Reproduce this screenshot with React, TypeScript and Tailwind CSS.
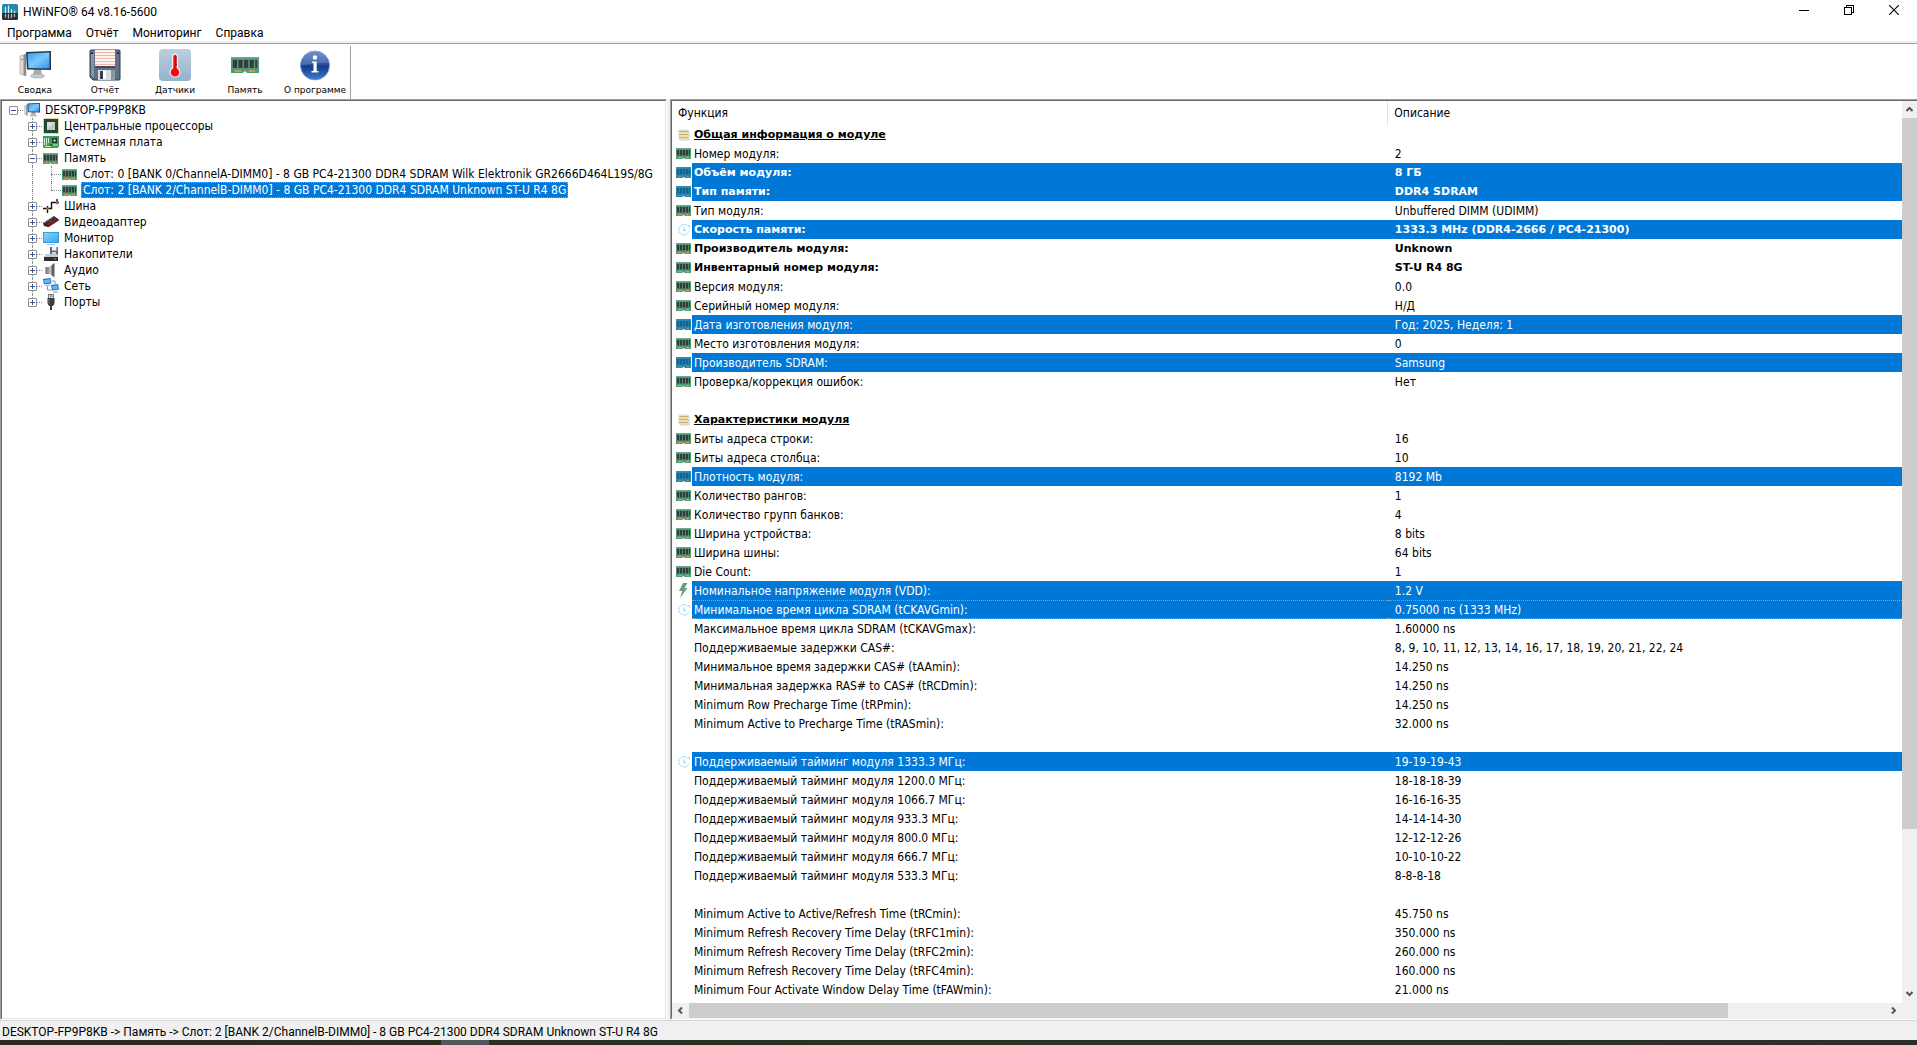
import type { ReactNode } from 'react';

const UI = "font-['Roboto','Noto_Sans',sans-serif]";

/* ---------- icons ---------- */

function RamIcon({ tinted = false, large = false }: { tinted?: boolean; large?: boolean }) {
  const board = tinted ? '#2788a9' : '#4f9a78';
  const chip = tinted ? '#1c5f96' : '#38393b';
  const edge = tinted ? '#2f93b0' : '#6fb08f';
  const pin = tinted ? '#5f93a0' : '#dc9a4a';
  return (
    <svg viewBox="0 0 15 11" className={large ? 'h-[16px] w-[28px]' : 'h-[11px] w-[15px]'} preserveAspectRatio="none" aria-hidden="true">
      <path d="M0 0H15V11H8.600L8 10H7L6.400 11H0Z" fill={board} />
      <rect x="0" y="0" width="15" height="1" fill={edge} opacity=".7" />
      {[1, 4, 7, 10].map((x) => (
        <rect key={x} x={x} y="2" width="2.200" height="5.500" fill={chip} />
      ))}
      <rect x="13" y="2" width="1" height="5.500" fill={chip} />
      <rect x="2" y="9" width="3.500" height="1.200" fill={pin} />
      <rect x="9.500" y="9" width="3.500" height="1.200" fill={pin} />
    </svg>
  );
}

function PcIcon({ size }: { size: 'sm' | 'lg' }) {
  return (
    <svg viewBox="0 0 32 32" className={size === 'lg' ? 'size-8' : 'size-4'} aria-hidden="true">
      <defs>
        <linearGradient id={`scr-${size}`} x1="0" y1="0" x2="1" y2="1">
          <stop offset="0" stopColor="#3a9cf0" />
          <stop offset=".5" stopColor="#7cc8ff" />
          <stop offset="1" stopColor="#2f8fe8" />
        </linearGradient>
      </defs>
      <path d="M1 7 7 5V27L1 25Z" fill="#dcdcdc" stroke="#9a9a9a" strokeWidth=".6" />
      <path d="M4.500 6 7 5V27L4.500 26Z" fill="#8b8b8b" />
      <rect x="2" y="10" width="2" height="1" fill="#888" />
      <path d="M15 20h7l1 6h-9Z" fill="#a9adb2" />
      <ellipse cx="18.500" cy="27" rx="7" ry="2" fill="#c9ccd0" stroke="#8f9398" strokeWidth=".5" />
      <path d="M7 3 32 2V21L8 20.500Z" fill="#24384a" />
      <path d="M8.500 4.500 30.500 3.500V19.500L9.500 19Z" fill={`url(#scr-${size})`} />
    </svg>
  );
}

function FloppyIcon() {
  return (
    <svg viewBox="0 0 32 32" className="size-8" aria-hidden="true">
      <path d="M1 2Q1 1 2 1H30Q31 1 31 2V30Q31 31 30 31H4L1 28Z" fill="#5f7087" stroke="#2f3a49" />
      <path d="M2 2H5V28L2 27Z" fill="#8493a8" />
      <rect x="6" y="1" width="20" height="16" fill="#fdf3ee" />
      <path d="M6 3.500H26M6 6.500H26M6 9.500H26M6 12.500H26M6 15.500H26" stroke="#efb9a8" />
      <rect x="2" y="3" width="2" height="2" fill="#27303c" />
      <rect x="28" y="3" width="2" height="2" fill="#27303c" />
      <path d="M6 17H26V19H6Z" fill="#3d4a5b" />
      <rect x="9" y="21" width="17" height="10" fill="#d8dbe0" />
      <rect x="11" y="22" width="5" height="8" fill="#36404d" />
      <rect x="14" y="22" width="3" height="8" fill="#fff" />
      <rect x="22" y="21" width="4" height="10" fill="#8d96a3" />
    </svg>
  );
}

function ThermoIcon() {
  return (
    <svg viewBox="0 0 32 32" className="size-8" aria-hidden="true">
      <defs>
        <linearGradient id="thermo" x1="0" y1="0" x2="0" y2="1">
          <stop offset="0" stopColor="#bccfdd" />
          <stop offset="1" stopColor="#94b2cc" />
        </linearGradient>
      </defs>
      <rect width="32" height="32" rx="4" fill="url(#thermo)" />
      <path d="M13 7.500a3 3 0 0 1 6 0V18.500a5.500 5.500 0 1 1-6 0Z" fill="#eef3f7" />
      <path d="M14.300 7.500a1.700 1.700 0 0 1 3.400 0V19.300a4.300 4.300 0 1 1-3.400 0Z" fill="#f30808" />
      <path d="M16 8H18M16 10.500H18M16 13H18M16 15.500H18" stroke="#7d0f0f" strokeWidth=".8" />
    </svg>
  );
}

function InfoIcon() {
  return (
    <svg viewBox="0 0 32 32" className="size-8" aria-hidden="true">
      <defs>
        <linearGradient id="info" x1="0" y1="0" x2="0" y2="1">
          <stop offset="0" stopColor="#4a78c4" />
          <stop offset=".5" stopColor="#1f4a9c" />
          <stop offset=".52" stopColor="#123a8a" />
          <stop offset="1" stopColor="#3d7fd0" />
        </linearGradient>
      </defs>
      <circle cx="16" cy="16.500" r="14.500" fill="url(#info)" stroke="#7d9ad0" strokeWidth=".8" />
      <path d="M3 16A13 13 0 0 1 29 14Q17 14 3 16Z" fill="#fff" opacity=".18" />
      <circle cx="16" cy="8.500" r="2.200" fill="#fff" />
      <path d="M13 12.500H17.700V22H19.500V23.500H12.500V22H14.500V14H13Z" fill="#fff" />
    </svg>
  );
}

function AppIcon() {
  return (
    <svg viewBox="0 0 16 16" className="size-4" aria-hidden="true">
      <path d="M0 1.500Q0 0 1.500 0H14.500Q16 0 16 1.500V9H0Z" fill="#2389ad" />
      <path d="M0 9H16V14.500Q16 16 14.500 16H1.500Q0 16 0 14.500Z" fill="#2d2f31" />
      <path d="M3.500 3V9M6.500 1.500V9M9.500 5V9M12.500 6.500V9" stroke="#d9f2fa" strokeWidth="1.200" />
      <path d="M3.500 10V13.500M6.500 10V14.500M9.500 10V14M12.500 10V13" stroke="#b9bcbe" strokeWidth="1.200" />
    </svg>
  );
}

function CpuIcon() {
  return (
    <svg viewBox="0 0 16 16" className="size-4" aria-hidden="true">
      <rect x=".5" y=".5" width="15" height="15" fill="none" stroke="#c9a640" strokeDasharray="1 1" />
      <rect x="1" y="1" width="14" height="14" fill="#1f4a33" />
      <rect x="4" y="4" width="8" height="8" fill="#d9dcd8" />
      <path d="M4 12 12 4V12Z" fill="#c3c8c3" />
    </svg>
  );
}

function BoardIcon() {
  return (
    <svg viewBox="0 0 16 16" className="size-4" aria-hidden="true">
      <path d="M0 2H16V13H15V14H0Z" fill="#3aa05c" />
      <path d="M1.500 4V11M3.500 4V11M5.500 4V9" stroke="#c8ecd2" />
      <rect x="9" y="4" width="5" height="5" fill="#20342a" />
      <rect x="10.500" y="5.500" width="2" height="2" fill="#e6e6e6" />
      <path d="M2 12.500H8M10 11H15" stroke="#d7e58a" />
      <rect x="7" y="10" width="2" height="2" fill="#1e6b3a" />
    </svg>
  );
}

function BusIcon() {
  return (
    <svg viewBox="0 0 16 16" className="size-4" aria-hidden="true">
      <path d="M0 10.500H8.500V4.500H16" fill="none" stroke="#111" strokeWidth="1.400" />
      <path d="M4.500 8V15M14 1V6" stroke="#111" strokeWidth="1.400" />
      <circle cx="4.500" cy="10.500" r="1.200" fill="#8c8a2c" />
      <circle cx="14" cy="4.500" r="1.200" fill="#8c8a2c" />
    </svg>
  );
}

function GpuIcon() {
  return (
    <svg viewBox="0 0 16 16" className="size-4" aria-hidden="true">
      <path d="M0 9 11 2 16 5.500 5 13 1 12Z" fill="#2c2a2b" />
      <path d="M1 9.500 11 3" stroke="#6b6769" />
      <path d="M5 11 7.500 7 9 9 13 4.500" fill="none" stroke="#b3262f" strokeWidth="1.100" />
      <path d="M5 13 16 6" stroke="#7c1f26" />
    </svg>
  );
}

function MonitorIcon() {
  return (
    <svg viewBox="0 0 16 16" className="size-4" aria-hidden="true">
      <defs>
        <linearGradient id="mon" x1="0" y1="0" x2="1" y2="1">
          <stop offset="0" stopColor="#8ad4fb" />
          <stop offset="1" stopColor="#3aa7ec" />
        </linearGradient>
      </defs>
      <rect x="0" y="2" width="16" height="11" fill="#2b8fd6" />
      <rect x=".8" y="2.800" width="14.400" height="9.400" fill="url(#mon)" />
      <path d="M4 14.500H12" stroke="#8cc9ee" />
    </svg>
  );
}

function DriveIcon() {
  return (
    <svg viewBox="0 0 16 16" className="size-4" aria-hidden="true">
      <rect x="7" y="1" width="8" height="8" fill="#5d6b7d" />
      <rect x="9" y="1" width="4.500" height="3.500" fill="#f4f4f4" />
      <rect x="9" y="6" width="4" height="3" fill="#cfd4da" />
      <path d="M3 8H14L15 11H1Z" fill="#c8c8c8" />
      <rect x="1" y="11" width="14" height="4" fill="#2e2e2e" />
      <rect x="11" y="12.500" width="2" height="1" fill="#37e04a" />
    </svg>
  );
}

function AudioIcon() {
  return (
    <svg viewBox="0 0 16 16" className="size-4" aria-hidden="true">
      <rect x="3" y="5" width="3.500" height="7" fill="#8f959b" />
      <path d="M6 5.500 11 1V15L6 11.500Z" fill="#b9bec3" />
      <path d="M8.500 3.500 11.500 1V15.500L8.500 13Z" fill="#5b6167" />
      <path d="M3 5V12" stroke="#5f6469" />
    </svg>
  );
}

function NetIcon() {
  return (
    <svg viewBox="0 0 16 16" className="size-4" aria-hidden="true">
      <path d="M0 1 7.500 0 8.500 5.500 1 6.500Z" fill="#1f66b8" />
      <path d="M1 2 7 1 7.700 4.700 1.700 5.500Z" fill="#5bb8f7" />
      <path d="M2.500 7 6.500 6.500 7 8 3 8.500Z" fill="#b0b5ba" />
      <path d="M8 7 15 6 16 11.500 9 12.500Z" fill="#1f66b8" />
      <path d="M9 8 14.300 7 15 10.700 9.700 11.500Z" fill="#5bb8f7" />
      <path d="M10 13.500 14.500 12.800 15 14.500 10.500 15Z" fill="#b0b5ba" />
      <path d="M4.500 8.500V12H8.500M9 3H12V6" fill="none" stroke="#8b9298" />
    </svg>
  );
}

function PortIcon() {
  return (
    <svg viewBox="0 0 16 16" className="size-4" aria-hidden="true">
      <rect x="5.500" y=".5" width="5" height="4" fill="#d4d4d4" stroke="#666" strokeWidth=".8" />
      <path d="M7 2H7.800M8.400 2H9.200" stroke="#333" />
      <path d="M4.500 4H11.500V9Q11.500 11 9.500 12H6.500Q4.500 11 4.500 9Z" fill="#3c3c3c" />
      <path d="M6 5V9.500" stroke="#777" />
      <path d="M8 12V16" stroke="#3c3c3c" strokeWidth="2" />
    </svg>
  );
}

function NoteIcon() {
  return (
    <svg viewBox="0 0 12 12" className="ml-0.5 size-3" aria-hidden="true">
      <rect x="1.500" y="1.500" width="10" height="10" rx="1" fill="#c4c0b8" opacity=".7" />
      <rect x=".5" y=".5" width="10" height="10" rx="1" fill="#e6dfc8" />
      <path d="M1 2.500H10M1 5.500H10M1 8.500H10" stroke="#d3b04a" />
    </svg>
  );
}

function ClockIcon() {
  return (
    <svg viewBox="0 0 12 12" className="ml-0.5 size-3" fill="none" stroke="#93d3f3" aria-hidden="true">
      <path d="M9.500 1.800A5.200 5.200 0 1 0 11 7.500" strokeWidth="1" strokeDasharray="2.500 .6" />
      <path d="M6 3.500V6.500H8" strokeWidth="1.200" />
      <path d="M10 1.500H11.500V3.500" strokeWidth="1" />
    </svg>
  );
}

function BoltIcon() {
  return (
    <svg viewBox="0 0 10 15" className="ml-0.5 h-[15px] w-[10px]" aria-hidden="true">
      <path d="M5 0H9.500L6.500 5H9.500L2 15 4.200 8H1Z" fill="#6f9a82" />
    </svg>
  );
}

function Chevron({ dir }: { dir: 'up' | 'down' | 'left' | 'right' }) {
  const d = {
    up: 'M1.500 6 4.500 3 7.500 6',
    down: 'M1.500 3 4.500 6 7.500 3',
    left: 'M6 1.500 3 4.500 6 7.500',
    right: 'M3 1.500 6 4.500 3 7.500',
  }[dir];
  return (
    <svg viewBox="0 0 9 9" className="size-[9px]" aria-hidden="true">
      <path d={d} fill="none" stroke="#555" strokeWidth="2" />
    </svg>
  );
}

/* ---------- window chrome ---------- */

function TitleBar() {
  const btn = 'flex w-[45px] items-center justify-center hover:bg-[#e5e5e5]';
  return (
    <header className="flex h-6 shrink-0 justify-between">
      <div className="flex items-center gap-[5px] pl-0.5">
        <AppIcon />
        <h1 className={`text-[12px] leading-4 ${UI}`}>HWiNFO® 64 v8.16-5600</h1>
      </div>
      <div className="flex pr-px pb-1">
        <button type="button" aria-label="Свернуть" className={btn}>
          <svg viewBox="0 0 10 10" className="size-[10px]" shapeRendering="crispEdges"><path d="M0 5.500H10" stroke="#000" /></svg>
        </button>
        <button type="button" aria-label="Восстановить" className={btn}>
          <svg viewBox="0 0 10 10" className="size-[10px]" fill="none" stroke="#000" shapeRendering="crispEdges">
            <path d="M.5 2.500H7.500V9.500H.5Z" />
            <path d="M2.500 2.500V.5H9.500V7.500H7.500" />
          </svg>
        </button>
        <button type="button" aria-label="Закрыть" className={btn}>
          <svg viewBox="0 0 10 10" className="size-[10px]"><path d="M0 0 10 10M10 0 0 10" stroke="#000" strokeWidth="1.100" /></svg>
        </button>
      </div>
    </header>
  );
}

function MenuBar() {
  return (
    <nav className={`flex h-[17px] shrink-0 items-center gap-[14px] pl-[7px] text-[12px] leading-4 ${UI}`}>
      {['Программа', 'Отчёт', 'Мониторинг', 'Справка'].map((m) => (
        <button key={m} type="button">{m}</button>
      ))}
    </nav>
  );
}

function Toolbar() {
  const tools: [string, ReactNode][] = [
    ['Сводка', <PcIcon size="lg" />],
    ['Отчёт', <FloppyIcon />],
    ['Датчики', <ThermoIcon />],
    ['Память', <RamIcon large />],
    ['О программе', <InfoIcon />],
  ];
  return (
    <div role="toolbar" className="flex h-[58px] shrink-0 border-t-2 border-[#f0f0f0]">
      <div className="flex flex-1 border-t border-[#a0a0a0]">
        <div className="mt-0.5 flex border-r border-[#a0a0a0]">
          {tools.map(([label, icon]) => (
            <button
              key={label}
              type="button"
              className="flex w-[70px] flex-col items-center gap-[3px] pt-[3px] text-[9px] leading-3 whitespace-nowrap font-['DejaVu_Sans',sans-serif]"
            >
              <span className="flex h-8 items-center">{icon}</span>
              {label}
            </button>
          ))}
        </div>
      </div>
    </div>
  );
}

/* ---------- device tree ---------- */

function GuideCell({ toggle, up, down, right }: { toggle?: '+' | '-'; up?: boolean; down?: boolean; right?: boolean }) {
  return (
    <span className="relative flex h-4 w-[19px] shrink-0 items-center justify-center">
      {up && <span className="absolute top-0 left-[9px] h-2 border-l border-dotted border-[#8c8c8c]" />}
      {down && <span className="absolute bottom-0 left-[9px] h-2 border-l border-dotted border-[#8c8c8c]" />}
      {right && <span className="absolute top-2 right-0 w-[10px] border-t border-dotted border-[#8c8c8c]" />}
      {toggle && (
        <button
          type="button"
          aria-label={toggle === '+' ? 'Развернуть' : 'Свернуть'}
          className="relative flex size-[9px] items-center justify-center rounded-[1px] border border-[#919191] bg-white"
        >
          <svg viewBox="0 0 5 5" className="size-[5px]" shapeRendering="crispEdges">
            <path d={toggle === '+' ? 'M0 2.500H5M2.500 0V5' : 'M0 2.500H5'} stroke="#3a55a0" />
          </svg>
        </button>
      )}
    </span>
  );
}

function TreeRow({ cells, icon, label, selected }: { cells: ReactNode; icon: ReactNode; label: string; selected?: boolean }) {
  return (
    <div className="flex h-4 items-center">
      {cells}
      <span className="ml-px flex w-4 shrink-0 items-center">{icon}</span>
      <span
        className={
          selected
            ? 'ml-[3px] flex h-4 items-center border border-dotted border-[#ff8728] bg-[#0078d7] px-px leading-[14px] whitespace-nowrap text-white'
            : 'ml-[3px] px-0.5 leading-4 whitespace-nowrap'
        }
      >
        {label}
      </span>
    </div>
  );
}

type Branch = { label: string; icon: ReactNode; children?: { label: string; selected?: boolean }[] };

const branches: Branch[] = [
  { label: 'Центральные процессоры', icon: <CpuIcon /> },
  { label: 'Системная плата', icon: <BoardIcon /> },
  {
    label: 'Память',
    icon: <RamIcon />,
    children: [
      { label: 'Слот: 0 [BANK 0/ChannelA-DIMM0] - 8 GB PC4-21300 DDR4 SDRAM Wilk Elektronik GR2666D464L19S/8G' },
      { label: 'Слот: 2 [BANK 2/ChannelB-DIMM0] - 8 GB PC4-21300 DDR4 SDRAM Unknown ST-U R4 8G', selected: true },
    ],
  },
  { label: 'Шина', icon: <BusIcon /> },
  { label: 'Видеоадаптер', icon: <GpuIcon /> },
  { label: 'Монитор', icon: <MonitorIcon /> },
  { label: 'Накопители', icon: <DriveIcon /> },
  { label: 'Аудио', icon: <AudioIcon /> },
  { label: 'Сеть', icon: <NetIcon /> },
  { label: 'Порты', icon: <PortIcon /> },
];

function DeviceTree() {
  return (
    <div className="w-[667px] shrink-0 overflow-hidden border-t border-r border-b border-l border-t-[#a0a0a0] border-r-white border-b-white border-l-[#a0a0a0]">
      <div className="h-full border border-t-[#696969] border-r-[#e3e3e3] border-b-[#e3e3e3] border-l-[#696969] bg-white pt-px pl-0.5">
        <TreeRow cells={<GuideCell toggle="-" right />} icon={<PcIcon size="sm" />} label="DESKTOP-FP9P8KB" />
        <ul>
          {branches.map((b, i) => {
            const last = i === branches.length - 1;
            return (
              <li key={b.label}>
                <TreeRow
                  cells={<><GuideCell /><GuideCell toggle={b.children ? '-' : '+'} up down={!last} right /></>}
                  icon={b.icon}
                  label={b.label}
                />
                {b.children && (
                  <ul>
                    {b.children.map((c, j) => (
                      <li key={c.label}>
                        <TreeRow
                          cells={<><GuideCell /><GuideCell up down /><GuideCell up down={j < b.children!.length - 1} right /></>}
                          icon={<RamIcon />}
                          label={c.label}
                          selected={c.selected}
                        />
                      </li>
                    ))}
                  </ul>
                )}
              </li>
            );
          })}
        </ul>
      </div>
    </div>
  );
}

/* ---------- details ---------- */

type Row = {
  icon?: 'ram' | 'clock' | 'bolt' | 'note';
  name?: string;
  value?: string;
  hl?: boolean;
  bold?: boolean;
  focus?: boolean;
};

const rows: Row[] = [
  { icon: 'note', name: 'Общая информация о модуле' },
  { icon: 'ram', name: 'Номер модуля:', value: '2' },
  { icon: 'ram', name: 'Объём модуля:', value: '8 ГБ', hl: true, bold: true },
  { icon: 'ram', name: 'Тип памяти:', value: 'DDR4 SDRAM', hl: true, bold: true },
  { icon: 'ram', name: 'Тип модуля:', value: 'Unbuffered DIMM (UDIMM)' },
  { icon: 'clock', name: 'Скорость памяти:', value: '1333.3 MHz (DDR4-2666 / PC4-21300)', hl: true, bold: true },
  { icon: 'ram', name: 'Производитель модуля:', value: 'Unknown', bold: true },
  { icon: 'ram', name: 'Инвентарный номер модуля:', value: 'ST-U R4 8G', bold: true },
  { icon: 'ram', name: 'Версия модуля:', value: '0.0' },
  { icon: 'ram', name: 'Серийный номер модуля:', value: 'Н/Д' },
  { icon: 'ram', name: 'Дата изготовления модуля:', value: 'Год: 2025, Неделя: 1', hl: true },
  { icon: 'ram', name: 'Место изготовления модуля:', value: '0' },
  { icon: 'ram', name: 'Производитель SDRAM:', value: 'Samsung', hl: true },
  { icon: 'ram', name: 'Проверка/коррекция ошибок:', value: 'Нет' },
  {},
  { icon: 'note', name: 'Характеристики модуля' },
  { icon: 'ram', name: 'Биты адреса строки:', value: '16' },
  { icon: 'ram', name: 'Биты адреса столбца:', value: '10' },
  { icon: 'ram', name: 'Плотность модуля:', value: '8192 Mb', hl: true },
  { icon: 'ram', name: 'Количество рангов:', value: '1' },
  { icon: 'ram', name: 'Количество групп банков:', value: '4' },
  { icon: 'ram', name: 'Ширина устройства:', value: '8 bits' },
  { icon: 'ram', name: 'Ширина шины:', value: '64 bits' },
  { icon: 'ram', name: 'Die Count:', value: '1' },
  { icon: 'bolt', name: 'Номинальное напряжение модуля (VDD):', value: '1.2 V', hl: true },
  { icon: 'clock', name: 'Минимальное время цикла SDRAM (tCKAVGmin):', value: '0.75000 ns (1333 MHz)', hl: true, focus: true },
  { name: 'Максимальное время цикла SDRAM (tCKAVGmax):', value: '1.60000 ns' },
  { name: 'Поддерживаемые задержки CAS#:', value: '8, 9, 10, 11, 12, 13, 14, 16, 17, 18, 19, 20, 21, 22, 24' },
  { name: 'Минимальное время задержки CAS# (tAAmin):', value: '14.250 ns' },
  { name: 'Минимальная задержка RAS# to CAS# (tRCDmin):', value: '14.250 ns' },
  { name: 'Minimum Row Precharge Time (tRPmin):', value: '14.250 ns' },
  { name: 'Minimum Active to Precharge Time (tRASmin):', value: '32.000 ns' },
  {},
  { icon: 'clock', name: 'Поддерживаемый тайминг модуля 1333.3 МГц:', value: '19-19-19-43', hl: true },
  { name: 'Поддерживаемый тайминг модуля 1200.0 МГц:', value: '18-18-18-39' },
  { name: 'Поддерживаемый тайминг модуля 1066.7 МГц:', value: '16-16-16-35' },
  { name: 'Поддерживаемый тайминг модуля 933.3 МГц:', value: '14-14-14-30' },
  { name: 'Поддерживаемый тайминг модуля 800.0 МГц:', value: '12-12-12-26' },
  { name: 'Поддерживаемый тайминг модуля 666.7 МГц:', value: '10-10-10-22' },
  { name: 'Поддерживаемый тайминг модуля 533.3 МГц:', value: '8-8-8-18' },
  {},
  { name: 'Minimum Active to Active/Refresh Time (tRCmin):', value: '45.750 ns' },
  { name: 'Minimum Refresh Recovery Time Delay (tRFC1min):', value: '350.000 ns' },
  { name: 'Minimum Refresh Recovery Time Delay (tRFC2min):', value: '260.000 ns' },
  { name: 'Minimum Refresh Recovery Time Delay (tRFC4min):', value: '160.000 ns' },
  { name: 'Minimum Four Activate Window Delay Time (tFAWmin):', value: '21.000 ns' },
];

function RowIcon({ row }: { row: Row }) {
  if (row.icon === 'ram') return <RamIcon tinted={row.hl} />;
  if (row.icon === 'clock') return <ClockIcon />;
  if (row.icon === 'bolt') return <BoltIcon />;
  if (row.icon === 'note') return <NoteIcon />;
  return null;
}

const BOLD = "text-[11px] font-bold font-['DejaVu_Sans',sans-serif]";

function DetailRow({ row }: { row: Row }) {
  const tone = row.hl ? 'bg-[#0078d7] text-white' : '';
  const weight = row.bold ? BOLD : '';
  const focus = row.focus ? 'border-y border-dotted border-[#ff8728]' : '';
  return (
    <tr className="h-[19px]">
      <td className="p-0">
        <div className="flex h-[19px] items-center">
          <span className="flex w-5 shrink-0 items-center pl-1"><RowIcon row={row} /></span>
          <span className={`flex h-[19px] flex-1 items-center pl-0.5 leading-4 whitespace-nowrap ${tone} ${weight} ${focus}`}>
            {row.icon === 'note' ? <span className={`${BOLD} underline`}>{row.name}</span> : row.name}
          </span>
        </div>
      </td>
      <td className="p-0">
        <div className={`flex h-[19px] items-center pl-[7px] leading-4 whitespace-nowrap ${tone} ${weight} ${focus}`}>{row.value}</div>
      </td>
    </tr>
  );
}

function Details() {
  return (
    <div className="flex min-w-0 flex-1 border-t border-b border-l border-t-[#a0a0a0] border-b-white border-l-[#a0a0a0]">
      <div className="flex min-w-0 flex-1 border-t border-b border-l border-t-[#696969] border-b-[#f0f0f0] border-l-[#696969] bg-white">
        <div className="flex min-w-0 flex-1 flex-col">
          <div className="min-h-0 flex-1 overflow-hidden">
            <table className="w-full table-fixed border-collapse text-left">
              <colgroup>
                <col className="w-[58.2%]" />
                <col />
              </colgroup>
              <thead>
                <tr className="h-6">
                  <th className="p-0 pl-1.5 font-normal">Функция</th>
                  <th className="border-l border-[#e0e0e0] p-0 pl-1.5 font-normal">Описание</th>
                </tr>
              </thead>
              <tbody>
                {rows.map((r, i) => <DetailRow key={i} row={r} />)}
              </tbody>
            </table>
          </div>
          <div className="flex h-[15px] shrink-0 bg-[#f0f0f0]">
            <button type="button" aria-label="Прокрутить влево" className="flex w-[17px] items-center justify-center"><Chevron dir="left" /></button>
            <div className="flex-1"><div className="h-full w-[86.9%] bg-[#cdcdcd]" /></div>
            <button type="button" aria-label="Прокрутить вправо" className="flex w-[17px] items-center justify-center"><Chevron dir="right" /></button>
          </div>
        </div>
        <div className="flex w-[15px] shrink-0 flex-col bg-[#f0f0f0] pb-4">
          <button type="button" aria-label="Прокрутить вверх" className="flex h-[17px] items-center justify-center"><Chevron dir="up" /></button>
          <div className="flex-1"><div className="h-[82%] bg-[#cdcdcd]" /></div>
          <button type="button" aria-label="Прокрутить вниз" className="flex h-[17px] items-center justify-center"><Chevron dir="down" /></button>
        </div>
      </div>
    </div>
  );
}

export default function App() {
  return (
    <div className="flex h-screen flex-col overflow-hidden bg-white font-['DejaVu_Sans_Condensed','DejaVu_Sans',sans-serif] text-[12px] leading-4 text-black">
      <TitleBar />
      <MenuBar />
      <Toolbar />
      <main className="flex min-h-0 flex-1 gap-[3px] bg-[#f0f0f0]">
        <DeviceTree />
        <Details />
      </main>
      <footer className={`flex h-5 shrink-0 items-center border-t border-[#d7d7d7] bg-[#f0f0f0] pt-0.5 pl-0.5 ${UI}`}>
        DESKTOP-FP9P8KB -&gt; Память -&gt; Слот: 2 [BANK 2/ChannelB-DIMM0] - 8 GB PC4-21300 DDR4 SDRAM Unknown ST-U R4 8G
      </footer>
      <div className="flex h-[5px] shrink-0 bg-linear-to-r from-[#2d2820] via-[#2a3322] to-[#2e2d2c]">
        <div className="ml-[23%] w-12 bg-[#55555c]" />
      </div>
    </div>
  );
}
